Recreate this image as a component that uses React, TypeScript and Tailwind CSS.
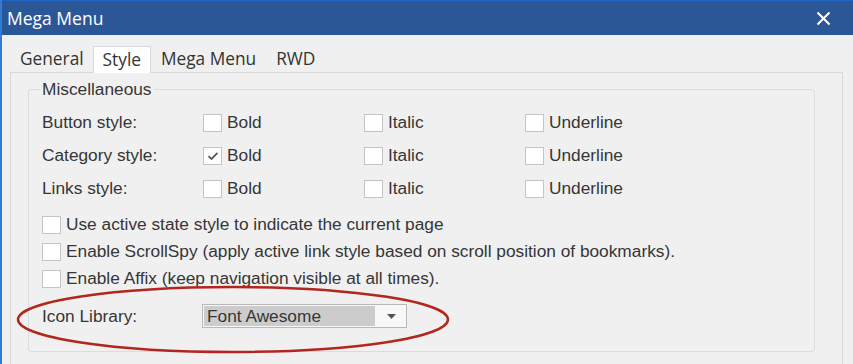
import React from "react";

const body = { fontFamily: '"Liberation Sans", Arial, sans-serif' };
const ui = { fontFamily: '"Open Sans", "Noto Sans", sans-serif' };

const Box = ({ checked = false }: { checked?: boolean }) => (
  <span className="flex items-center justify-center w-[19px] h-[18px] border border-[#c4c4c4] bg-white shrink-0">
    {checked && (
      <svg width="12" height="10" viewBox="0 0 12 10">
        <path d="M1.5 5.2 L4.5 8 L10.5 1.8" fill="none" stroke="#5a5a5a" strokeWidth="1.8" />
      </svg>
    )}
  </span>
);

const Check = ({ label, checked }: { label: string; checked?: boolean }) => (
  <div className="flex items-center gap-[5px] h-[19px]">
    <Box checked={checked} />
    <span>{label}</span>
  </div>
);

const rows = [
  { label: "Button style:", bold: false },
  { label: "Category style:", bold: true },
  { label: "Links style:", bold: false },
];

const options = [
  "Use active state style to indicate the current page",
  "Enable ScrollSpy (apply active link style based on scroll position of bookmarks).",
  "Enable Affix (keep navigation visible at all times).",
];

export default function App() {
  return (
    <div className="relative w-[853px] h-[364px] overflow-hidden bg-[#f0f0f0] border-l-2 border-[#2f7bd6]">
      {/* Title bar */}
      <div className="flex items-center justify-between h-[35px] bg-[#2b5797] border-t border-[#1f64c4] pl-[5px] pr-[22px]">
        <span className="text-white text-[17.5px]" style={ui}>Mega Menu</span>
        <svg width="15" height="15" viewBox="0 0 15 15">
          <path d="M1.5 1.5 L13.5 13.5 M13.5 1.5 L1.5 13.5" stroke="#fff" strokeWidth="2" />
        </svg>
      </div>

      {/* Tabs */}
      <div className="flex items-end pl-[8px] mt-[11px] text-[17.3px] text-[#333]" style={ui}>
        <div className="pl-[10px] pr-[9px] h-[26px] flex items-center">General</div>
        <div className="px-[9px] h-[27px] flex items-center bg-white border border-b-0 border-[#d9d9d9] -mb-px relative z-10">Style</div>
        <div className="px-[10px] h-[26px] flex items-center">Mega Menu</div>
        <div className="px-[10px] h-[26px] flex items-center">RWD</div>
      </div>

      {/* Tab panel */}
      <div className="ml-[8px] w-[833px] h-[310px] border border-[#d9d9d9] pt-[6px] pl-[17px]">
        <fieldset
          className="w-[787px] h-[273px] border border-[#dcdcdc] rounded-[3px] pl-[13px] text-[17.3px] leading-[19px] text-[#363636]"
          style={body}
        >
          <legend className="-ml-[2px] px-[2px] h-[20px] leading-[20px] text-[17.3px]">Miscellaneous</legend>

          <div className="flex flex-col gap-[14px] mt-[14px]">
            {rows.map((r) => (
              <div key={r.label} className="grid grid-cols-[161px_161px_161px_1fr] items-center h-[19px]">
                <span>{r.label}</span>
                <Check label="Bold" checked={r.bold} />
                <Check label="Italic" />
                <Check label="Underline" />
              </div>
            ))}
          </div>

          <div className="flex flex-col gap-[8px] mt-[17px]">
            {options.map((o) => (
              <Check key={o} label={o} />
            ))}
          </div>

          <div className="grid grid-cols-[160px_1fr] items-center mt-[16px]">
            <span>Icon Library:</span>
            <div className="flex w-[205px] h-[24px] border border-[#b8b8b8] bg-[#f8f8f8]">
              <div className="flex items-center w-[171px] bg-[#cccccc] pl-[3px] m-px">Font Awesome</div>
              <div className="flex flex-1 items-center justify-center">
                <svg width="9" height="5" viewBox="0 0 9 5">
                  <path d="M0 0 H9 L4.5 5 Z" fill="#555" />
                </svg>
              </div>
            </div>
          </div>
        </fieldset>
      </div>

      {/* Annotation ellipse */}
      <svg className="absolute -left-[2px] top-0 pointer-events-none" width="853" height="364">
        <ellipse cx="233" cy="319.5" rx="215" ry="32.5" fill="none" stroke="#b3261e" strokeWidth="2.5" />
      </svg>
    </div>
  );
}
